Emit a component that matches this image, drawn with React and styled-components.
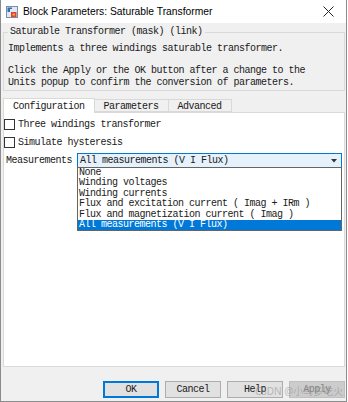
import React from "react";
import styled, { createGlobalStyle } from "styled-components";

const Global = createGlobalStyle`
  html, body { margin: 0; padding: 0; background: #ffffff; }
  body { width: 348px; height: 402px; overflow: hidden; }
`;

const mono = `"Liberation Mono", "DejaVu Sans Mono", monospace`;

const Window = styled.div`
  position: relative;
  width: 347px;
  height: 402px;
  box-sizing: border-box;
  border: 1px solid #8c8c8c;
  border-top: none;
  background: #f0f0f0;
  display: flex;
  flex-direction: column;
  font-family: ${mono};
  font-size: 10px;
  letter-spacing: -0.5px;
  color: #1a1a1a;
`;

const TitleBar = styled.div`
  height: 23px;
  flex: none;
  background: #ffffff;
  display: flex;
  align-items: center;
  padding-left: 5px;
  gap: 5px;
`;

const TitleText = styled.span`
  font-family: "Liberation Sans", "Noto Sans", sans-serif;
  font-size: 10.3px;
  letter-spacing: 0;
  color: #000;
  flex: 1;
`;

const CloseBtn = styled.span`
  width: 28px;
  display: flex;
  justify-content: center;
  margin-right: 4px;
`;

const Body = styled.div`
  flex: 1;
  display: flex;
  flex-direction: column;
  padding: 0 1px 3px 2px;
`;

const GroupBox = styled.fieldset`
  margin: 3px 0 0 0;
  padding: 0 4px 1px 4px;
  border: 1px solid #d9d9d9;
  min-width: 0;
`;

const Legend = styled.legend`
  padding: 0 2px;
  line-height: 12px;
`;

const Para = styled.div`
  line-height: 12px;
  margin-top: ${(p) => p.$gap}px;
  white-space: pre;
`;

const TabRow = styled.div`
  display: flex;
  align-items: flex-end;
  margin-top: 7px;
  height: 14px;
  position: relative;
  z-index: 1;
`;

const Tab = styled.div`
  box-sizing: border-box;
  height: ${(p) => (p.$active ? 15 : 13)}px;
  line-height: ${(p) => (p.$active ? 15 : 13)}px;
  padding: 0 9px;
  border: 1px solid #d9d9d9;
  border-bottom: ${(p) => (p.$active ? "none" : "1px solid #d9d9d9")};
  margin-left: -1px;
  background: ${(p) => (p.$active ? "#ffffff" : "#f0f0f0")};
  margin-bottom: ${(p) => (p.$active ? "-1px" : "0")};
  &:first-child { margin-left: 0; }
`;

const Panel = styled.div`
  position: relative;
  box-sizing: border-box;
  height: 255px;
  background: #ffffff;
  border: 1px solid #d9d9d9;
  display: flex;
  flex-direction: column;
  gap: 4px;
  padding: 4px 1px 0 0;
`;

const CheckRow = styled.label`
  display: flex;
  align-items: center;
  height: 14px;
  gap: 3px;
`;

const Box = styled.span`
  width: 11px;
  height: 11px;
  box-sizing: border-box;
  border: 1px solid #333333;
  background: #fff;
  flex: none;
`;

const FieldRow = styled.div`
  display: flex;
  align-items: center;
  height: 15px;
`;

const FieldLabel = styled.span`
  margin-left: 2px;
  width: 71px;
  flex: none;
`;

const ComboWrap = styled.div`
  position: relative;
  width: 265px;
  height: 15px;
`;

const Combo = styled.div`
  box-sizing: border-box;
  height: 100%;
  background: #e5f1fb;
  border: 1px solid #0078d7;
  display: flex;
  align-items: center;
  padding: 0 4px 0 2px;
  justify-content: space-between;
`;

const List = styled.div`
  position: absolute;
  top: 14px;
  left: 0;
  width: 265px;
  box-sizing: border-box;
  background: #ffffff;
  border: 1px solid #646464;
  z-index: 5;
`;

const Item = styled.div`
  height: 10.4px;
  line-height: 10.4px;
  padding-left: 1px;
  white-space: pre;
  background: ${(p) => (p.$sel ? "#0078d7" : "transparent")};
  color: ${(p) => (p.$sel ? "#ffffff" : "#1a1a1a")};
`;

const ButtonRow = styled.div`
  margin-top: auto;
  display: flex;
  justify-content: flex-end;
  gap: 6px;
  padding-right: 0;
  position: relative;
`;

const Button = styled.div`
  box-sizing: border-box;
  width: 56px;
  height: 17px;
  display: flex;
  align-items: center;
  justify-content: center;
  background: ${(p) => (p.$disabled ? "#cccccc" : "#e1e1e1")};
  border: ${(p) =>
    p.$primary ? "2px solid #0078d7" : p.$disabled ? "1px solid #bfbfbf" : "1px solid #adadad"};
  color: ${(p) => (p.$disabled ? "#838383" : "#1a1a1a")};
`;

const Watermark = styled.span`
  position: absolute;
  left: 252px;
  top: 2px;
  font-family: "Noto Sans", "Noto Sans CJK SC", sans-serif;
  font-size: 10px;
  letter-spacing: 0;
  color: rgba(140, 140, 140, 0.55);
  white-space: nowrap;
  pointer-events: none;
`;

const AppIcon = () => (
  <svg width="12" height="12" viewBox="0 0 12 12">
    <rect x="0.5" y="0.5" width="11" height="11" fill="#dfe8f2" stroke="#7d8fa6" />
    <path d="M1.5 1.5 L6 1.5 L6 3 L4 3 L4 6 L1.5 6 Z" fill="#2f6fc0" />
    <rect x="5" y="6" width="5.5" height="5" fill="#e0431f" />
    <rect x="6.5" y="7.5" width="2.5" height="2" fill="#f6a27a" />
  </svg>
);

const CloseIcon = () => (
  <svg width="11" height="11" viewBox="0 0 11 11">
    <path d="M0.5 0.5 L10.5 10.5 M10.5 0.5 L0.5 10.5" stroke="#222" strokeWidth="1" />
  </svg>
);

const Arrow = () => (
  <svg width="6" height="4" viewBox="0 0 6 4">
    <path d="M0 0 L6 0 L3 3.5 Z" fill="#333" />
  </svg>
);

const options = [
  "None",
  "Winding voltages",
  "Winding currents",
  "Flux and excitation current ( Imag + IRm )",
  "Flux and magnetization current ( Imag )",
  "All measurements (V I Flux)",
];

export default function App() {
  return (
    <>
      <Global />
      <Window>
        <TitleBar>
          <AppIcon />
          <TitleText>Block Parameters: Saturable Transformer</TitleText>
          <CloseBtn>
            <CloseIcon />
          </CloseBtn>
        </TitleBar>
        <Body>
          <GroupBox>
            <Legend>Saturable Transformer (mask) (link)</Legend>
            <Para $gap={5}>Implements a three windings saturable transformer.</Para>
            <Para $gap={10}>
              {"Click the Apply or the OK button after a change to the\nUnits popup to confirm the conversion of parameters."}
            </Para>
          </GroupBox>
          <TabRow>
            <Tab $active>Configuration</Tab>
            <Tab>Parameters</Tab>
            <Tab>Advanced</Tab>
          </TabRow>
          <Panel>
            <CheckRow>
              <Box />
              Three windings transformer
            </CheckRow>
            <CheckRow>
              <Box />
              Simulate hysteresis
            </CheckRow>
            <FieldRow>
              <FieldLabel>Measurements</FieldLabel>
              <ComboWrap>
                <Combo>
                  <span>All measurements (V I Flux)</span>
                  <Arrow />
                </Combo>
                <List>
                  {options.map((o, i) => (
                    <Item key={o} $sel={i === options.length - 1}>
                      {o}
                    </Item>
                  ))}
                </List>
              </ComboWrap>
            </FieldRow>
          </Panel>
          <ButtonRow>
            <Button $primary>OK</Button>
            <Button>Cancel</Button>
            <Button>Help</Button>
            <Button $disabled>Apply</Button>
            <Watermark>CSDN @小马多吃火</Watermark>
          </ButtonRow>
        </Body>
      </Window>
    </>
  );
}
